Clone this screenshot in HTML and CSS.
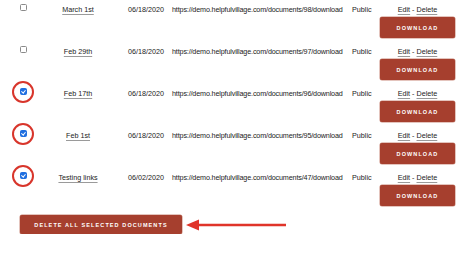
FILE: index.html
```html
<!DOCTYPE html>
<html lang="en">
<head>
  <meta charset="UTF-8">
  <title>Documents</title>
  <link rel="stylesheet" href="styles.css">
</head>
<body>
  <div class="docs">
    <div class="doc-row">
      <div class="cell check"><span class="box"></span></div>
      <div class="cell title"><a href="#">March 1st</a></div>
      <div class="cell date">06/18/2020</div>
      <div class="cell url">https://demo.helpfulvillage.com/documents/98/download</div>
      <div class="cell vis">Public</div>
      <div class="cell actions">
        <div class="links"><a href="#">Edit</a> - <a href="#">Delete</a></div>
        <button class="btn dl">DOWNLOAD</button>
      </div>
    </div>
    <div class="doc-row">
      <div class="cell check"><span class="box"></span></div>
      <div class="cell title"><a href="#">Feb 29th</a></div>
      <div class="cell date">06/18/2020</div>
      <div class="cell url">https://demo.helpfulvillage.com/documents/97/download</div>
      <div class="cell vis">Public</div>
      <div class="cell actions">
        <div class="links"><a href="#">Edit</a> - <a href="#">Delete</a></div>
        <button class="btn dl">DOWNLOAD</button>
      </div>
    </div>
    <div class="doc-row">
      <div class="cell check"><span class="box checked"></span><span class="ring"></span></div>
      <div class="cell title"><a href="#">Feb 17th</a></div>
      <div class="cell date">06/18/2020</div>
      <div class="cell url">https://demo.helpfulvillage.com/documents/96/download</div>
      <div class="cell vis">Public</div>
      <div class="cell actions">
        <div class="links"><a href="#">Edit</a> - <a href="#">Delete</a></div>
        <button class="btn dl">DOWNLOAD</button>
      </div>
    </div>
    <div class="doc-row">
      <div class="cell check"><span class="box checked"></span><span class="ring"></span></div>
      <div class="cell title"><a href="#">Feb 1st</a></div>
      <div class="cell date">06/18/2020</div>
      <div class="cell url">https://demo.helpfulvillage.com/documents/95/download</div>
      <div class="cell vis">Public</div>
      <div class="cell actions">
        <div class="links"><a href="#">Edit</a> - <a href="#">Delete</a></div>
        <button class="btn dl">DOWNLOAD</button>
      </div>
    </div>
    <div class="doc-row">
      <div class="cell check"><span class="box checked"></span><span class="ring"></span></div>
      <div class="cell title"><a href="#">Testing links</a></div>
      <div class="cell date">06/02/2020</div>
      <div class="cell url">https://demo.helpfulvillage.com/documents/47/download</div>
      <div class="cell vis">Public</div>
      <div class="cell actions">
        <div class="links"><a href="#">Edit</a> - <a href="#">Delete</a></div>
        <button class="btn dl">DOWNLOAD</button>
      </div>
    </div>
  </div>

  <div class="bulk">
    <button class="btn del-all">DELETE ALL SELECTED DOCUMENTS</button>
    <!-- annotation arrow -->
    <svg class="arrow" width="102" height="14" viewBox="0 0 102 14">
      <path d="M12 7H101" stroke="#e0342a" stroke-width="2.4"/>
      <path d="M1 7L14 1.5V12.5Z" fill="#e0342a"/>
    </svg>
  </div>
</body>
</html>
```

FILE: styles.css
```css
body {
  margin: 0;
  background: #fff;
  font-family: 'Liberation Sans', Arial, sans-serif;
  font-size: 7.2px;
  color: #222;
}
a {
  color: #222;
  text-decoration: underline;
  text-decoration-color: #9a9a9a;
  text-underline-offset: 1.5px;
}
.doc-row {
  display: grid;
  grid-template-columns: 46px 64px 62px 180px 28px 75px;
  align-items: start;
  height: 42px;
}
.cell {
  padding-top: 3.5px;
  line-height: 12px;
  white-space: nowrap;
}
.title { text-align: center; }
.date { padding-left: 18px; }
.url { letter-spacing: -0.15px; }
.check {
  position: relative;
  display: flex;
  justify-content: center;
  padding-top: 4px;
}
.box {
  display: block;
  width: 5px;
  height: 5px;
  border: 1px solid #8a8a8a;
  border-radius: 1.5px;
  background: #fff;
}
.box.checked {
  background: #1f6fe0;
  border-color: #1f6fe0;
  position: relative;
}
.box.checked::after {
  content: "";
  position: absolute;
  left: 1.5px;
  top: 0;
  width: 1.5px;
  height: 3px;
  border: solid #fff;
  border-width: 0 1.2px 1.2px 0;
  transform: rotate(40deg);
}
.ring {
  position: absolute;
  left: 12px;
  top: -3px;
  width: 18px;
  height: 18px;
  border: 2px solid #d8352b;
  border-radius: 50%;
}
.actions {
  display: flex;
  flex-direction: column;
  align-items: center;
}
.links { text-align: center; }
.btn {
  font-family: 'Liberation Sans', Arial, sans-serif;
  background: #a63f2e;
  color: #fff;
  border: none;
  border-radius: 2px;
  font-weight: bold;
  font-size: 5.5px;
  letter-spacing: 1.1px;
  padding: 0;
  cursor: pointer;
  box-shadow: 0 0 0 0.5px #c98a7c;
}
.dl {
  margin-top: 1.5px;
  width: 75px;
  height: 21px;
}
.bulk {
  display: flex;
  align-items: center;
  gap: 3px;
  padding: 5px 0 0 20px;
}
.del-all {
  width: 162px;
  height: 19px;
}
.arrow { display: block; }
```
